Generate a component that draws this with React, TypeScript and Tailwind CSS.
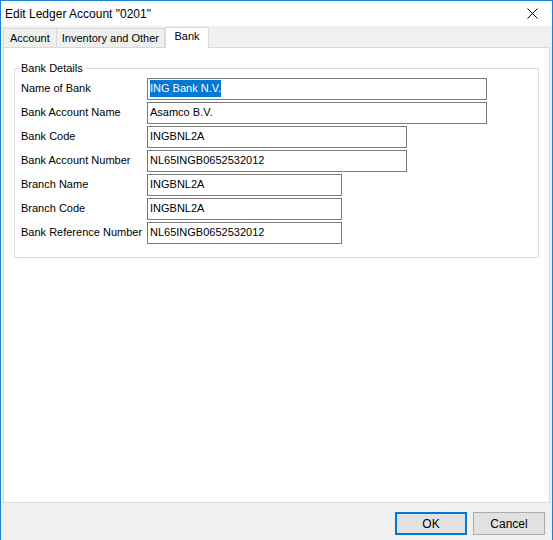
const fields = [
  { label: 'Name of Bank', value: 'ING Bank N.V.', w: 'w-[340px]', selected: true },
  { label: 'Bank Account Name', value: 'Asamco B.V.', w: 'w-[340px]' },
  { label: 'Bank Code', value: 'INGBNL2A', w: 'w-[260px]' },
  { label: 'Bank Account Number', value: 'NL65INGB0652532012', w: 'w-[260px]' },
  { label: 'Branch Name', value: 'INGBNL2A', w: 'w-[195px]' },
  { label: 'Branch Code', value: 'INGBNL2A', w: 'w-[195px]' },
  { label: 'Bank Reference Number', value: 'NL65INGB0652532012', w: 'w-[195px]' },
]

export default function App() {
  return (
    <div className="w-[553px] h-[540px] flex flex-col bg-[#f0f0f0] border-x border-t border-[#1883d7] text-[11px] text-black" style={{ fontFamily: '"Liberation Sans", Arial, sans-serif' }}>
      <div className="h-[25px] bg-white flex items-center justify-between pl-[4px] pr-[14px] text-[12px]">
        <span>Edit Ledger Account "0201"</span>
        <svg width="11" height="11" viewBox="0 0 11 11"><path d="M0.5 0.5L10.5 10.5M10.5 0.5L0.5 10.5" stroke="#000" strokeWidth="1" /></svg>
      </div>
      <div className="flex items-end h-[21px] pl-[2px] relative z-10">
        <div className="h-[19px] px-[6px] flex items-center border border-b-0 border-[#d9d9d9] bg-[#f0f0f0]">Account</div>
        <div className="h-[19px] px-[5px] flex items-center border border-l-0 border-b-0 border-[#d9d9d9] bg-[#f0f0f0]">Inventory and Other</div>
        <div className="h-[21px] w-[44px] pb-[3px] flex items-center justify-center border border-b-0 border-[#d9d9d9] bg-white -mb-px">Bank</div>
      </div>
      <div className="mx-[2px] h-[456px] bg-white border border-[#d9d9d9] pt-[12px] px-[10px]">
        <fieldset className="border border-[#dcdcdc] h-[198px] px-[6px] pt-[1px]">
          <legend className="px-[1px] -ml-[1px]">Bank Details</legend>
          <div className="flex flex-col gap-[2px]">
            {fields.map((f) => (
              <div key={f.label} className="flex items-center h-[22px]">
                <span className="w-[126px] whitespace-nowrap">{f.label}</span>
                <div className={`${f.w} h-[22px] border border-[#7a7a7a] flex items-center px-[2px] bg-white`}>
                  <span className={f.selected ? 'bg-[#0078d7] text-white' : ''}>{f.value}</span>
                </div>
              </div>
            ))}
          </div>
        </fieldset>
      </div>
      <div className="flex justify-end gap-[6px] pr-[7px] pt-[9px]">
        <button className="w-[72px] h-[23px] bg-[#e1e1e1] border-2 border-[#0078d7] text-[12px]">OK</button>
        <button className="w-[72px] h-[23px] bg-[#e1e1e1] border border-[#adadad] text-[12px]">Cancel</button>
      </div>
    </div>
  )
}
